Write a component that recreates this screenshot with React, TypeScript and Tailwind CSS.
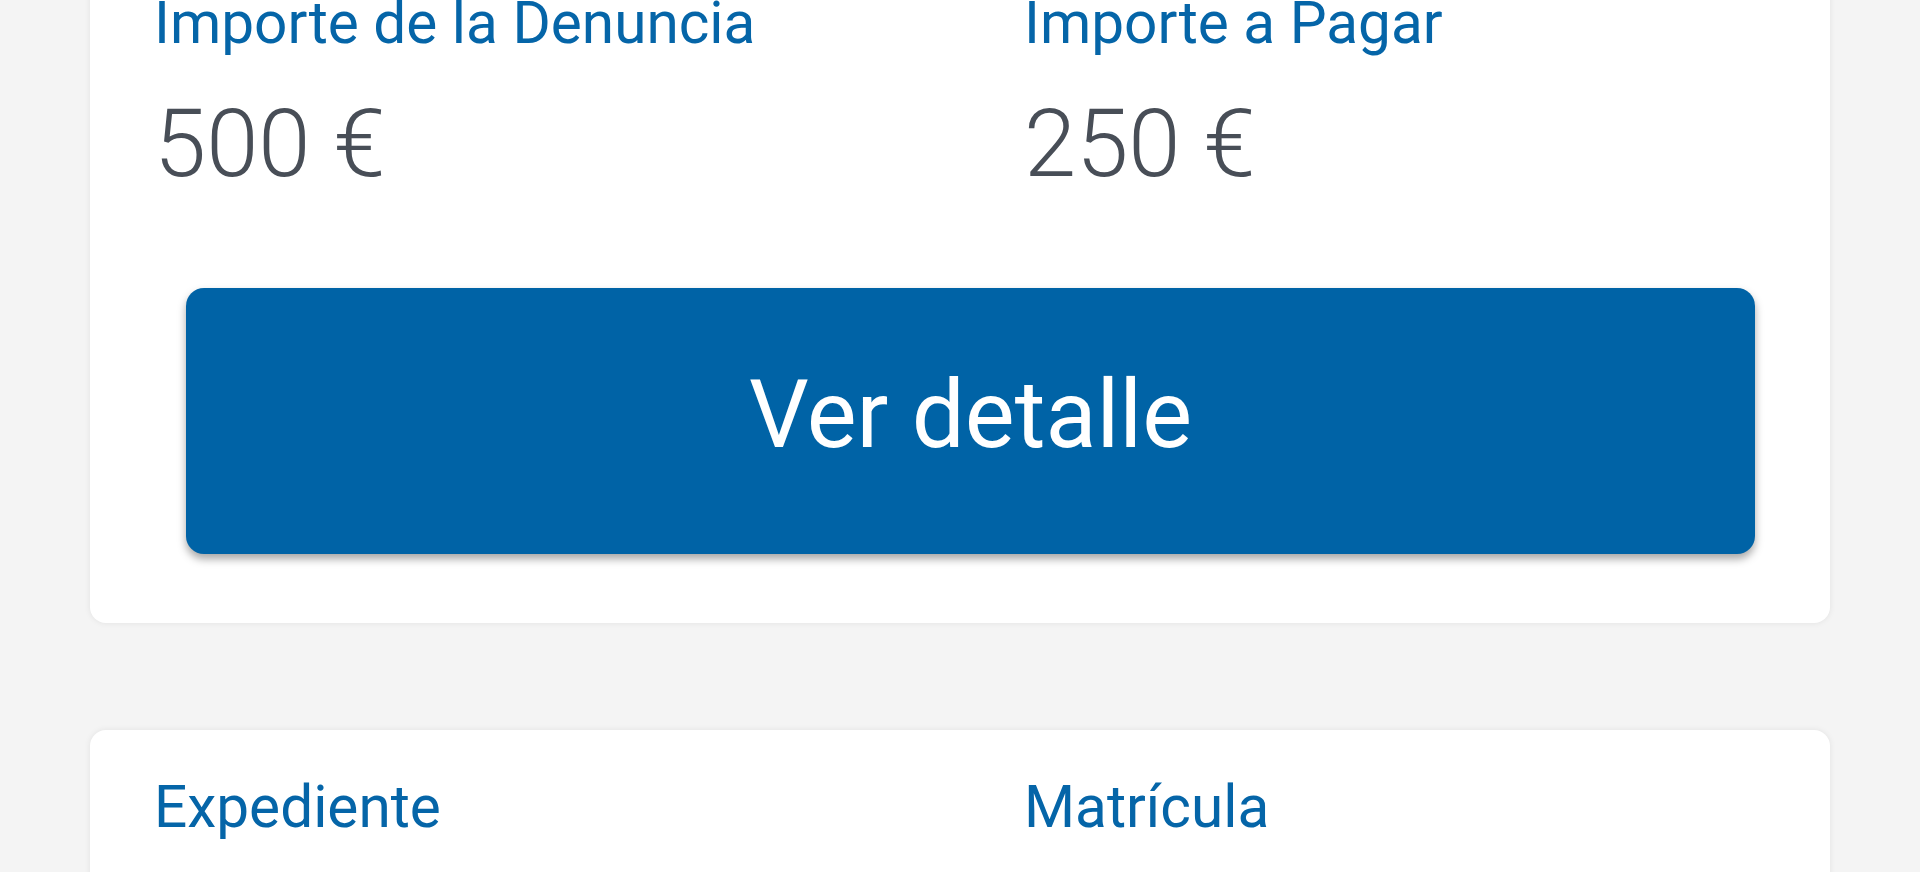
export default function App() {
  return (
    <div className="h-screen overflow-hidden bg-[#f4f4f4] font-['Roboto',sans-serif]">
      <div className="mx-[90px] -mt-[54px] rounded-[16px] bg-white pt-[43px] pb-[69px] shadow-[0_0_6px_rgba(0,0,0,0.08)]">
        <div className="grid grid-cols-2">
          <div className="pl-[64px]">
            <div className="text-[58.5px] leading-[68px] text-[#0565a8]">Importe de la Denuncia</div>
            <div className="mt-[33px] text-[94px] font-light leading-[108px] text-[#484e57]">500 €</div>
          </div>
          <div className="pl-[64px]">
            <div className="text-[58.5px] leading-[68px] text-[#0565a8]">Importe a Pagar</div>
            <div className="mt-[33px] text-[94px] font-light leading-[108px] text-[#484e57]">250 €</div>
          </div>
        </div>
        <button
          type="button"
          className="mt-[90px] ml-[96px] mr-[75px] flex h-[266px] w-[calc(100%-171px)] items-center justify-center rounded-[18px] bg-[#0063a6] pb-[12px] text-[94px] leading-[108px] text-white shadow-[0_5px_8px_rgba(0,0,0,0.35)]"
        >
          Ver detalle
        </button>
      </div>

      <div className="mx-[90px] mt-[107px] h-[400px] rounded-[16px] bg-white pt-[43px] shadow-[0_0_6px_rgba(0,0,0,0.08)]">
        <div className="grid grid-cols-2">
          <div className="pl-[64px] text-[58.5px] leading-[68px] text-[#0565a8]">Expediente</div>
          <div className="pl-[64px] text-[58.5px] leading-[68px] text-[#0565a8]">Matrícula</div>
        </div>
      </div>
    </div>
  )
}
